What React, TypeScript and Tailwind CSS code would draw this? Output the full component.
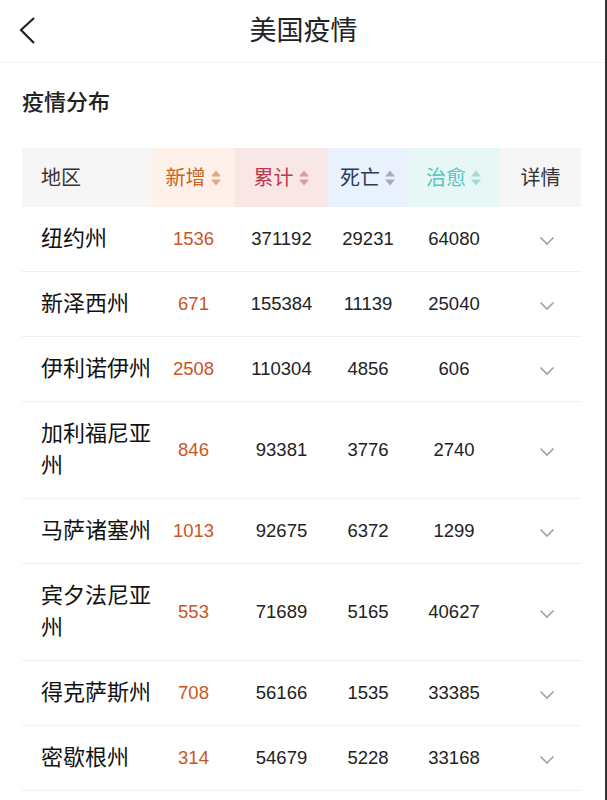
import React from 'react';

const rows = [
  { name: '纽约州', add: '1536', total: '371192', dead: '29231', cured: '64080' },
  { name: '新泽西州', add: '671', total: '155384', dead: '11139', cured: '25040' },
  { name: '伊利诺伊州', add: '2508', total: '110304', dead: '4856', cured: '606' },
  { name: '加利福尼亚州', add: '846', total: '93381', dead: '3776', cured: '2740' },
  { name: '马萨诸塞州', add: '1013', total: '92675', dead: '6372', cured: '1299' },
  { name: '宾夕法尼亚州', add: '553', total: '71689', dead: '5165', cured: '40627' },
  { name: '得克萨斯州', add: '708', total: '56166', dead: '1535', cured: '33385' },
  { name: '密歇根州', add: '314', total: '54679', dead: '5228', cured: '33168' },
];

const SortIcon = ({ color }: { color: string }) => (
  <svg width="12" height="20" viewBox="0 0 12 20" className="ml-[4px]">
    <path d="M6 2.5 L11 8.5 L1 8.5 Z" fill={color} />
    <path d="M6 17.5 L11 11.5 L1 11.5 Z" fill={color} />
  </svg>
);

const ChevronDown = () => (
  <svg width="16" height="10" viewBox="0 0 16 10">
    <path d="M1.5 1.5 L8 8 L14.5 1.5" fill="none" stroke="#a0a0a0" strokeWidth="1.6" />
  </svg>
);

const cols = 'grid-cols-[130px_83px_93px_80px_92px_81px]';

export default function App() {
  return (
    <div
      className="w-[607px] min-h-[800px] bg-white border-r-2 border-[#333] text-[#222]"
      style={{ fontFamily: '"Liberation Sans", "Noto Sans CJK SC", sans-serif' }}
    >
      {/* top bar */}
      <div className="relative h-[63px] flex items-center justify-center border-b border-[#f2f2f2]">
        <svg width="20" height="30" viewBox="0 0 20 30" className="absolute left-[18px] top-[16px]">
          <path d="M16 2 L3 14 L16 27" fill="none" stroke="#222" strokeWidth="2.2" />
        </svg>
        <span className="text-[27px] pl-[2px]">美国疫情</span>
      </div>

      <div className="h-[85px] flex items-center px-[22px] pb-[6px]">
        <span className="text-[22px] font-medium">疫情分布</span>
      </div>

      <div className="mx-[22px] w-[559px]">
        <div className={`grid ${cols} h-[59px] text-[20px] bg-[#f6f6f6]`}>
          <div className="flex items-center pl-[19px] text-[#333]">地区</div>
          <div className="flex items-center justify-center bg-[#fdf1ea] text-[#c9621f]">
            新增<SortIcon color="#e3a77f" />
          </div>
          <div className="flex items-center justify-center bg-[#f9e7e8] text-[#c1364a]">
            累计<SortIcon color="#d99aa1" />
          </div>
          <div className="flex items-center justify-center bg-[#e9f1fc] text-[#2b3a55]">
            死亡<SortIcon color="#a6adb8" />
          </div>
          <div className="flex items-center justify-center bg-[#e7f7f5] text-[#52c6bf]">
            治愈<SortIcon color="#a2dbd7" />
          </div>
          <div className="flex items-center justify-center text-[#333]">详情</div>
        </div>

        {rows.map((r) => (
          <div key={r.name} className={`grid ${cols} py-[16px] border-b border-[#efefef] items-center`}>
            <div className="pl-[19px] text-[22px] leading-[32px] text-[#111]">{r.name}</div>
            <div className="text-center text-[18.5px] text-[#c9561f]">{r.add}</div>
            <div className="text-center text-[18.5px]">{r.total}</div>
            <div className="text-center text-[18.5px]">{r.dead}</div>
            <div className="text-center text-[18.5px]">{r.cured}</div>
            <div className="flex justify-center pl-[12px] pt-[4px]">
              <ChevronDown />
            </div>
          </div>
        ))}
      </div>
    </div>
  );
}
